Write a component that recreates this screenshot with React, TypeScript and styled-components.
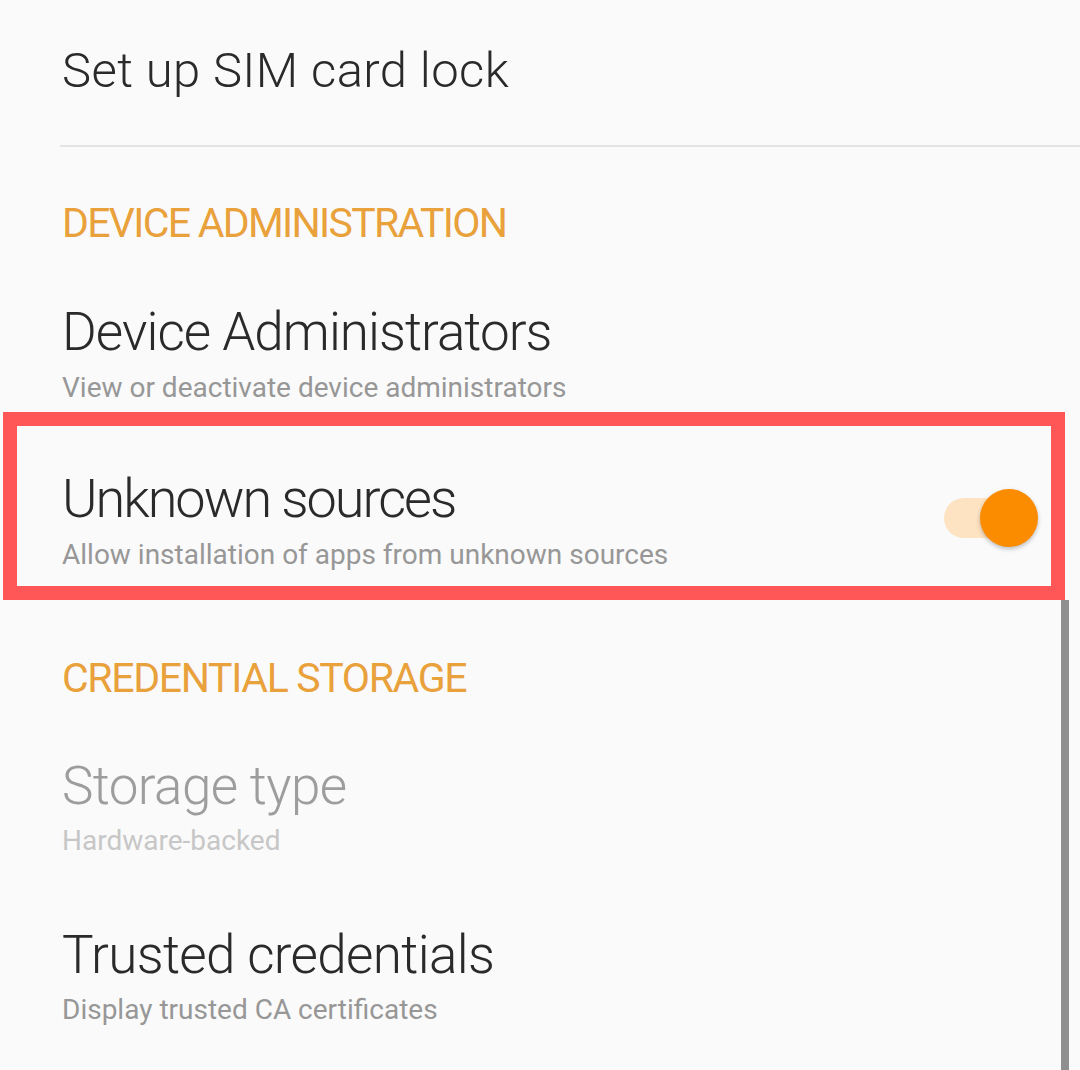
import React from "react";
import styled, { createGlobalStyle } from "styled-components";

const Global = createGlobalStyle`
  html, body { margin: 0; padding: 0; background: #fafafa; }
  body { font-family: Roboto, "Noto Sans", sans-serif; }
`;

const Page = styled.div`
  position: relative;
  width: 1080px;
  height: 1070px;
  overflow: hidden;
  background: #fafafa;
`;

const Row = styled.div<{ $pt: number }>`
  padding: ${(p) => p.$pt}px 0 0 62px;
`;

const Title = styled.div<{ $size?: number; $muted?: boolean; $ls?: number }>`
  font-size: ${(p) => p.$size ?? 53}px;
  line-height: 1;
  font-weight: 300;
  letter-spacing: ${(p) => p.$ls ?? 0}px;
  color: ${(p) => (p.$muted ? "#9d9d9d" : "#2a2a2a")};
  white-space: nowrap;
`;

const Sub = styled.div<{ $gap: number; $muted?: boolean }>`
  margin-top: ${(p) => p.$gap}px;
  font-size: 28px;
  line-height: 1;
  font-weight: 400;
  color: ${(p) => (p.$muted ? "#c7c7c7" : "#979797")};
  white-space: nowrap;
`;

const Divider = styled.div`
  margin: 50px 0 0 60px;
  height: 2px;
  background: #e4e4e4;
`;

const Header = styled.div<{ $pt: number; $ls: number }>`
  padding: ${(p) => p.$pt}px 0 0 62px;
  font-size: 41px;
  line-height: 1;
  letter-spacing: ${(p) => p.$ls}px;
  color: #e9a13b;
  white-space: nowrap;
`;

const Highlight = styled.div`
  margin: 10px 15px 0 3px;
  border: 14px solid #ff5757;
  padding: 46px 13px 17px 45px;
  display: flex;
  align-items: center;
  justify-content: space-between;
`;

const TextBlock = styled.div`
  display: flex;
  flex-direction: column;
`;

const Toggle = styled.div`
  position: relative;
  width: 94px;
  height: 58px;
  margin-top: -6px;
  flex: none;
`;

const Track = styled.div`
  position: absolute;
  left: 0;
  top: 9px;
  width: 80px;
  height: 40px;
  border-radius: 20px;
  background: #fde3c2;
`;

const Knob = styled.div`
  position: absolute;
  right: 0;
  top: 0;
  width: 58px;
  height: 58px;
  border-radius: 50%;
  background: #fb8c00;
  box-shadow: 0 2px 4px rgba(0, 0, 0, 0.25);
`;

const Scrollbar = styled.div`
  position: absolute;
  right: 11px;
  top: 600px;
  bottom: 0;
  width: 8px;
  background: #8f8f8f;
`;

export default function App() {
  return (
    <Page>
      <Global />
      <Row $pt={46}>
        <Title $size={49} $ls={0.4}>Set up SIM card lock</Title>
      </Row>
      <Divider />
      <Header $pt={56} $ls={-1.7}>DEVICE ADMINISTRATION</Header>
      <Row $pt={62}>
        <Title $ls={-0.95}>Device Administrators</Title>
        <Sub $gap={15}>View or deactivate device administrators</Sub>
      </Row>
      <Highlight>
        <TextBlock>
          <Title $size={54} $ls={-2}>Unknown sources</Title>
          <Sub $gap={15}>Allow installation of apps from unknown sources</Sub>
        </TextBlock>
        <Toggle>
          <Track />
          <Knob />
        </Toggle>
      </Highlight>
      <Header $pt={58} $ls={-1.35}>CREDENTIAL STORAGE</Header>
      <Row $pt={61}>
        <Title $muted $ls={-0.6}>Storage type</Title>
        <Sub $gap={14} $muted>Hardware-backed</Sub>
      </Row>
      <Row $pt={74}>
        <Title $ls={-0.65}>Trusted credentials</Title>
        <Sub $gap={14}>Display trusted CA certificates</Sub>
      </Row>
      <Scrollbar />
    </Page>
  );
}
